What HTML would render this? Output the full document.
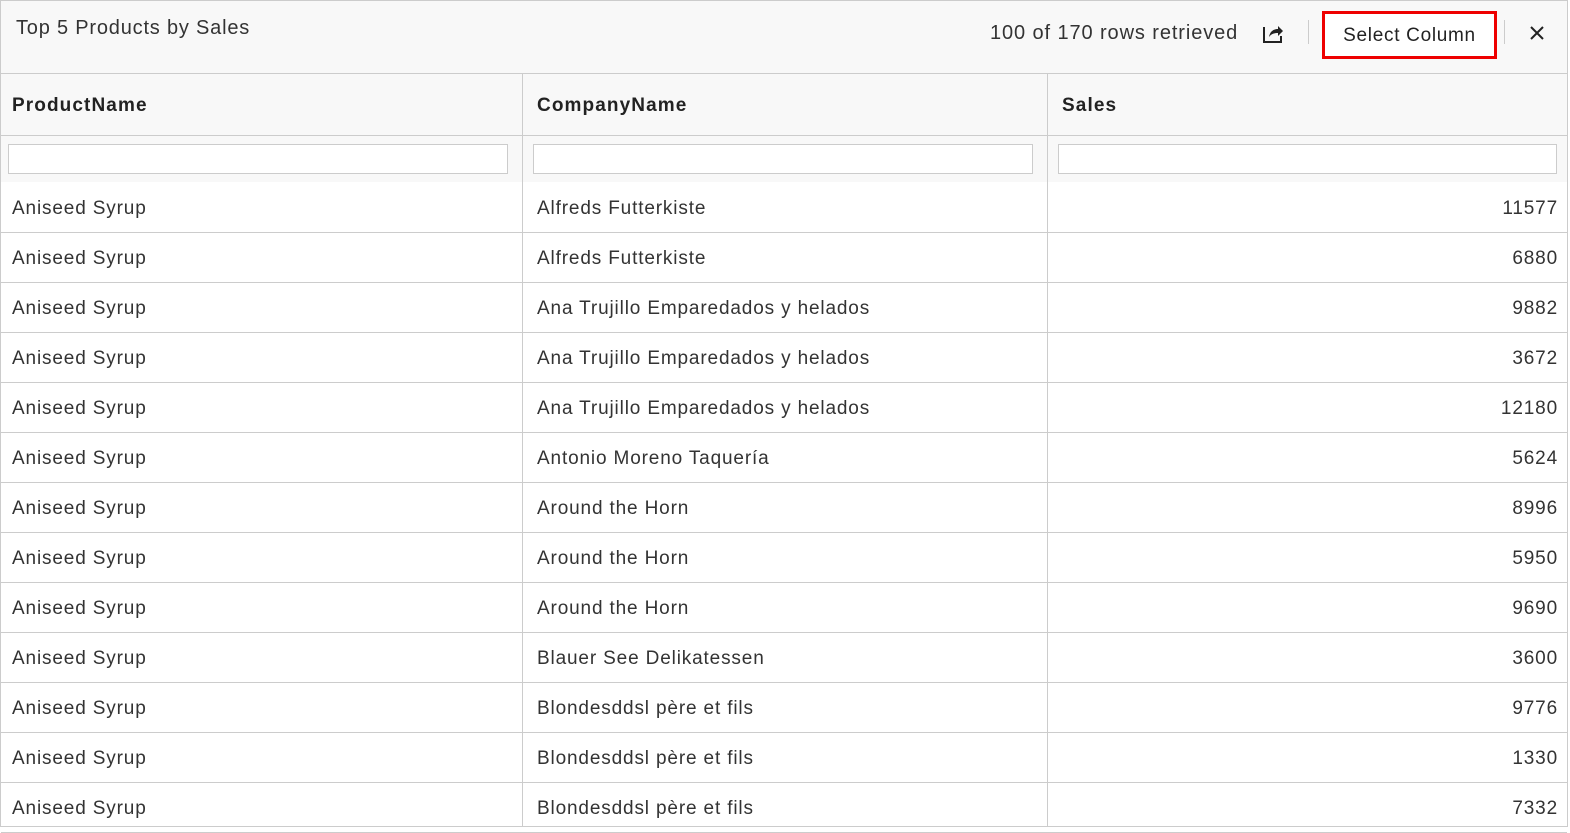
<!DOCTYPE html>
<html><head><meta charset="utf-8"><style>
*{box-sizing:border-box;margin:0;padding:0}
body{width:1570px;height:828px;background:#fff;font-family:"Liberation Sans",sans-serif;color:#333;position:relative;overflow:hidden}
.frame{position:absolute;left:0;top:0;width:1568px;height:827px;border:1px solid #ccc}
.top{position:absolute;left:1px;top:1px;width:1566px;height:73px;background:#f8f8f8;border-bottom:1px solid #ccc}
.title{position:absolute;left:16px;top:17px;font-size:20px;color:#333;letter-spacing:0.8px}
.rows{position:absolute;left:990px;top:22px;font-size:20px;color:#333;letter-spacing:0.9px}
.sep{position:absolute;top:20px;width:1px;height:24px;background:#ccc}
.btn{position:absolute;left:1322px;top:11px;width:175px;height:48px;border:3px solid #e00;background:#fff;font-size:19px;color:#222;text-align:center;line-height:44px;letter-spacing:0.7px}
.hdr{position:absolute;left:1px;top:74px;width:1566px;height:108px;background:#f8f8f8}
.hl{position:absolute;left:1px;width:1566px;height:1px;background:#ccc}
.vl{position:absolute;top:74px;width:1px;height:753px;background:#ccc}
.h{position:absolute;top:95px;font-size:19px;font-weight:bold;color:#222;letter-spacing:1.1px}
.inp{position:absolute;top:144px;height:30px;background:#fff;border:1px solid #ccc}
.c{position:absolute;font-size:19px;color:#333;white-space:nowrap;letter-spacing:0.85px}
.r{text-align:right;width:300px}
</style></head><body>
<div class="frame"></div>
<div class="top"></div>
<div class="title">Top 5 Products by Sales</div>
<div class="rows">100 of 170 rows retrieved</div>
<svg style="position:absolute;left:1262px;top:22px" width="22" height="22" viewBox="0 0 22 22"><path d="M2 5v15h17v-6" fill="none" stroke="#222" stroke-width="2"/><path d="M7 15c1-6 5-8 9-8V4l5 5-5 5v-3c-4 0-7 1-9 4z" fill="#222"/></svg>
<div class="sep" style="left:1308px"></div>
<div class="btn">Select Column</div>
<div class="sep" style="left:1504px"></div>
<svg style="position:absolute;left:1530px;top:26px" width="14" height="14" viewBox="0 0 14 14"><path d="M1 1l12 12M13 1L1 13" stroke="#222" stroke-width="2"/></svg>
<div class="hdr"></div>
<div class="hl" style="top:135px"></div>
<div class="h" style="left:12px">ProductName</div>
<div class="h" style="left:537px">CompanyName</div>
<div class="h" style="left:1062px">Sales</div>
<div class="inp" style="left:8px;width:500px"></div>
<div class="inp" style="left:533px;width:500px"></div>
<div class="inp" style="left:1058px;width:499px"></div>
<div class="vl" style="left:522px"></div>
<div class="vl" style="left:1047px"></div>
<div id="d"></div>
<script>
var data=[["Alfreds Futterkiste",11577],["Alfreds Futterkiste",6880],["Ana Trujillo Emparedados y helados",9882],["Ana Trujillo Emparedados y helados",3672],["Ana Trujillo Emparedados y helados",12180],["Antonio Moreno Taquería",5624],["Around the Horn",8996],["Around the Horn",5950],["Around the Horn",9690],["Blauer See Delikatessen",3600],["Blondesddsl père et fils",9776],["Blondesddsl père et fils",1330],["Blondesddsl père et fils",7332]];
var h="";
data.forEach(function(r,i){var y=182+i*50;var t=y+16;
h+='<div class="c" style="left:12px;top:'+t+'px">Aniseed Syrup</div><div class="c" style="left:537px;top:'+t+'px">'+r[0]+'</div><div class="c r" style="left:1258px;top:'+t+'px;letter-spacing:0.85px">'+r[1]+'</div>';
h+='<div class="hl" style="top:'+(y+50)+'px"></div>';});
document.getElementById("d").innerHTML=h;
</script>
</body></html>
